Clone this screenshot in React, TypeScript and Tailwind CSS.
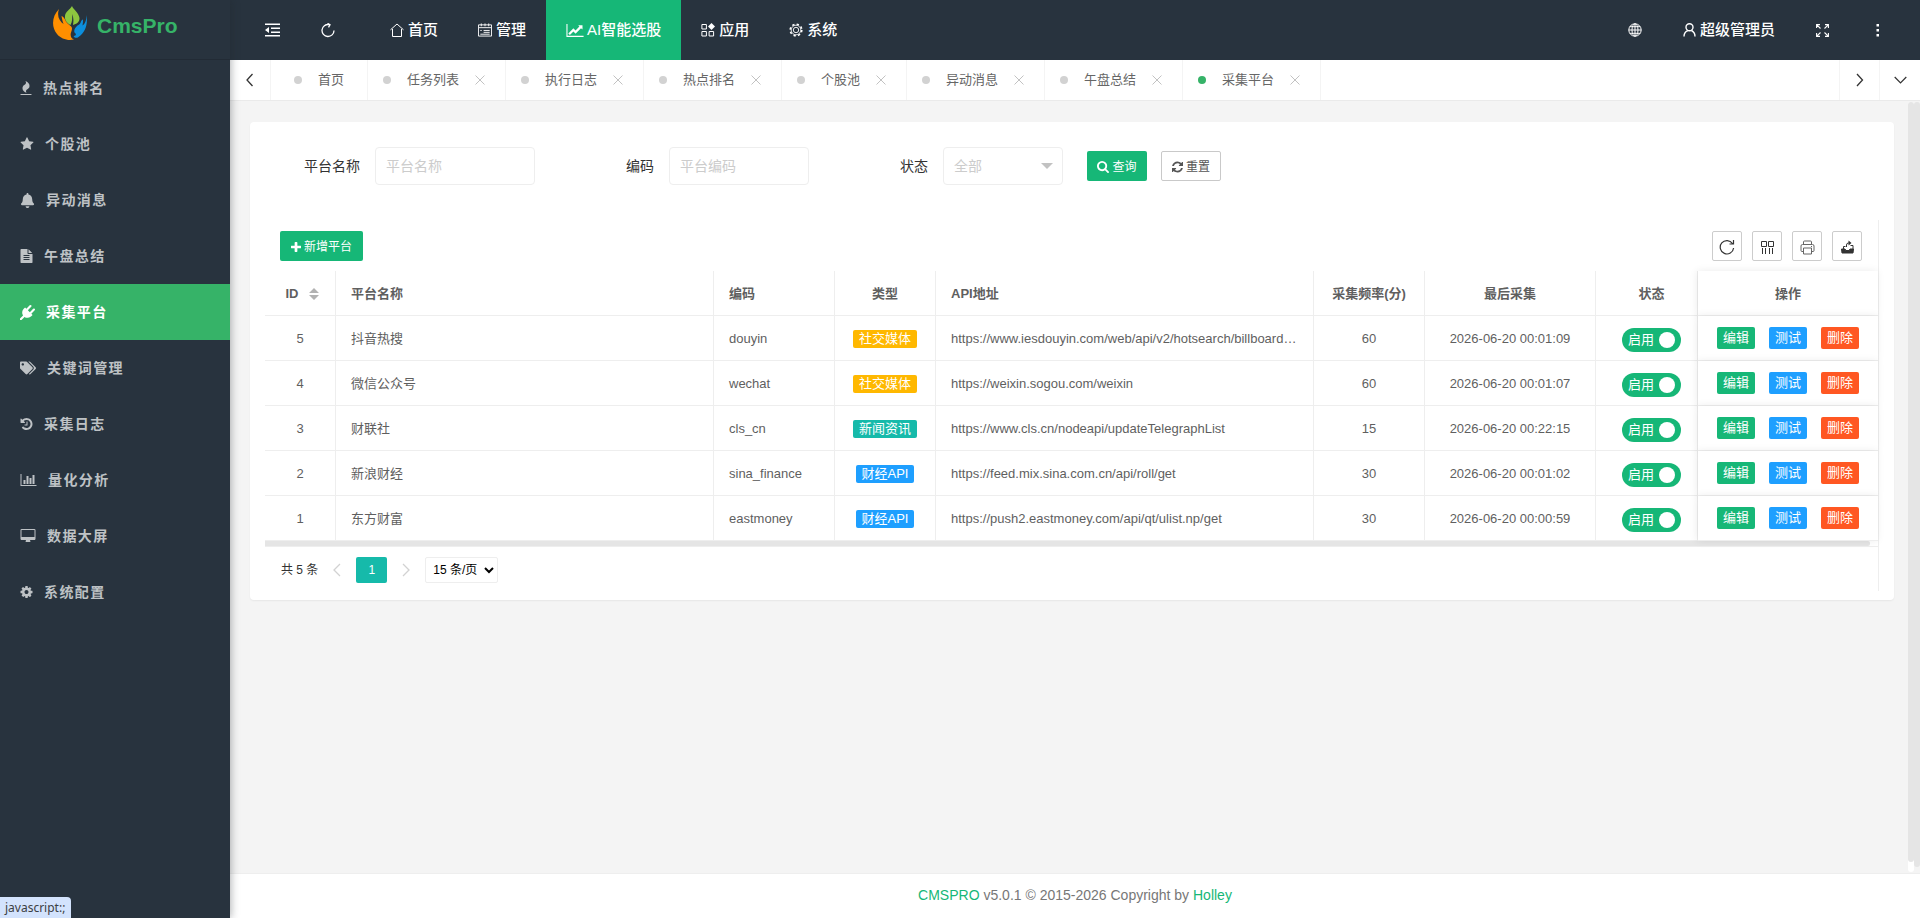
import type { ReactNode } from "react";
import { FaBell, FaTags } from "react-icons/fa";

type Tone = "amber" | "teal" | "blue";

type Platform = {
  id: number;
  name: string;
  code: string;
  type: string;
  tone: Tone;
  url: string;
  minutes: number;
  last: string;
};

const platforms: Platform[] = [
  { id: 5, name: "抖音热搜", code: "douyin", type: "社交媒体", tone: "amber", url: "https://www.iesdouyin.com/web/api/v2/hotsearch/billboard…", minutes: 60, last: "2026-06-20 00:01:09" },
  { id: 4, name: "微信公众号", code: "wechat", type: "社交媒体", tone: "amber", url: "https://weixin.sogou.com/weixin", minutes: 60, last: "2026-06-20 00:01:07" },
  { id: 3, name: "财联社", code: "cls_cn", type: "新闻资讯", tone: "teal", url: "https://www.cls.cn/nodeapi/updateTelegraphList", minutes: 15, last: "2026-06-20 00:22:15" },
  { id: 2, name: "新浪财经", code: "sina_finance", type: "财经API", tone: "blue", url: "https://feed.mix.sina.com.cn/api/roll/get", minutes: 30, last: "2026-06-20 00:01:02" },
  { id: 1, name: "东方财富", code: "eastmoney", type: "财经API", tone: "blue", url: "https://push2.eastmoney.com/api/qt/ulist.np/get", minutes: 30, last: "2026-06-20 00:00:59" },
];

const tones: Record<Tone, string> = {
  amber: "bg-[#ffb800]",
  teal: "bg-[#16baaa]",
  blue: "bg-[#1e9fff]",
};

const menu: { label: string; icon: ReactNode }[] = [
  { label: "热点排名", icon: <IconFire /> },
  { label: "个股池", icon: <IconStar /> },
  { label: "异动消息", icon: <FaBell size={15} /> },
  { label: "午盘总结", icon: <IconFile /> },
  { label: "采集平台", icon: <IconPlug /> },
  { label: "关键词管理", icon: <FaTags size={16} /> },
  { label: "采集日志", icon: <IconHistory /> },
  { label: "量化分析", icon: <IconBars /> },
  { label: "数据大屏", icon: <IconDesktop /> },
  { label: "系统配置", icon: <IconCog /> },
];

const nav: { label: string; icon: ReactNode }[] = [
  { label: "首页", icon: <IconHome /> },
  { label: "管理", icon: <IconCalendar /> },
  { label: "AI智能选股", icon: <IconTrend /> },
  { label: "应用", icon: <IconApps /> },
  { label: "系统", icon: <IconGear /> },
];

const tabs = ["任务列表", "执行日志", "热点排名", "个股池", "异动消息", "午盘总结", "采集平台"];

function App() {
  return (
    <div className="flex min-h-screen bg-[#f4f4f4] font-['Liberation_Sans','Noto_Sans_CJK_SC',sans-serif] text-sm text-[#333]">
      <Sidebar />
      <div className="flex min-w-0 flex-1 flex-col">
        <Header />
        <TabBar />
        <div className="flex flex-1">
          <main className="min-w-0 flex-1 pt-[21px] pr-3.5 pl-5">
            <section className="rounded bg-white pb-[9px] shadow-[0_1px_2px_rgba(0,0,0,0.06)]">
              <SearchForm />
              <div className="mx-[15px] border-r border-[#eee] pb-2">
                <Toolbar />
                <PlatformTable />
                <Pagination />
              </div>
            </section>
          </main>
          {/* scroll tracks of the inner frame and of the page */}
          <div className="mt-px flex w-3 shrink-0">
            <div className="mb-px w-1.5 rounded bg-white pb-2.5">
              <div className="h-full rounded bg-[#e5e5e5]" />
            </div>
            <div className="mb-1.5 w-1.5 rounded bg-[#e5e5e5]" />
          </div>
        </div>
        <footer className="h-[45px] border-t border-[#eee] bg-white text-center leading-[42px] text-[#777]">
          <a href="#" className="text-[#16b777]">CMSPRO</a> v5.0.1 © 2015-2026 Copyright by{" "}
          <a href="#" className="text-[#16b777]">Holley</a>
        </footer>
      </div>
      <div className="fixed bottom-0 left-0 z-20 h-[21px] w-[71px] rounded-tr bg-[#d3e3fd] pl-[5px] font-['Noto_Sans',sans-serif] text-xs leading-[21px] text-[#3c4043]">
        javascript:;
      </div>
    </div>
  );
}

function Sidebar() {
  return (
    <aside className="relative z-10 w-[230px] shrink-0 bg-[#28333e] shadow-[1px_0_8px_rgba(29,35,41,0.35)]">
      <a href="#" className="flex h-[60px] items-start gap-2.5 border-b border-[#222b35] pt-1.5 pl-[53px]">
        <Logo />
        <span className="pt-[5px] text-[21px] leading-[30px] font-bold text-[#36b368]">CmsPro</span>
      </a>
      <nav>
        {menu.map((item) => (
          <a
            key={item.label}
            href="#"
            className={
              item.label === "采集平台"
                ? "flex h-14 items-center gap-[11px] bg-[#36b368] pl-5 font-semibold tracking-widest text-white"
                : "flex h-14 items-center gap-[11px] pl-5 font-semibold tracking-widest text-[#bec2c5] hover:text-white"
            }
          >
            {item.icon}
            {item.label}
          </a>
        ))}
      </nav>
    </aside>
  );
}

function Header() {
  return (
    <header className="flex h-[60px] shrink-0 bg-[#28333e] px-[15px] text-[15px] text-white">
      <button type="button" aria-label="收起菜单" className="flex w-[55px] items-center justify-center">
        <IconFold />
      </button>
      <button type="button" aria-label="刷新" className="flex w-[55px] items-center justify-center">
        <IconReload />
      </button>
      <nav className="ml-[15px] flex font-medium">
        {nav.map((item) => (
          <a
            key={item.label}
            href="#"
            className={
              item.label === "AI智能选股"
                ? "flex items-center gap-[3px] bg-[#16b777] px-5 text-white"
                : "flex items-center gap-1 px-5 hover:bg-white/5"
            }
          >
            {item.icon}
            <span className="pb-px">{item.label}</span>
          </a>
        ))}
      </nav>
      <div className="ml-auto flex">
        <button type="button" aria-label="语言" className="flex w-[55px] items-center justify-center">
          <IconGlobe />
        </button>
        <button type="button" className="flex items-center gap-1 px-5 font-medium">
          <IconUser />
          <span className="pb-px">超级管理员</span>
        </button>
        <button type="button" aria-label="全屏" className="flex w-[55px] items-center justify-center">
          <IconExpand />
        </button>
        <button type="button" aria-label="更多" className="flex w-[55px] items-center justify-center">
          <svg width="4" height="14" viewBox="0 0 4 14" fill="currentColor">
            <path d="M.5 1H3v2.500H.5zM.5 6H3v2.500H.5zM.5 11H3v2.500H.5z" />
          </svg>
        </button>
      </div>
    </header>
  );
}

function TabBar() {
  return (
    <div className="flex h-[41px] shrink-0 border-b border-[#eaeaea] bg-white text-[13px] text-[#666]">
      <button type="button" aria-label="向左" className="flex w-[41px] items-center justify-center border-r border-[#f4f4f4] text-[#333]">
        <Chevron d="M7.500 1 2 7l5.500 6" />
      </button>
      <a href="#" className="flex w-[97px] items-center justify-center gap-4 border-r border-[#f4f4f4]">
        <i className="size-2 rounded-full bg-[#d2d2d2]" />
        首页
      </a>
      {tabs.map((tab) => (
        <div key={tab} className="flex items-center border-r border-[#f4f4f4] pr-5 pl-[15px]">
          <i className={tab === "采集平台" ? "size-2 rounded-full bg-[#36b368]" : "size-2 rounded-full bg-[#d2d2d2]"} />
          <a href="#" className="px-4">{tab}</a>
          <button type="button" aria-label="关闭" className="text-[#c2c2c2]">
            <svg width="10" height="10" viewBox="0 0 10 10" fill="none" stroke="currentColor">
              <path d="m.5.5 9 9m0-9-9 9" />
            </svg>
          </button>
        </div>
      ))}
      <button type="button" aria-label="向右" className="ml-auto flex w-10 items-center justify-center border-l border-[#f4f4f4] text-[#333]">
        <Chevron d="m2 1 5.500 6L2 13" />
      </button>
      <button type="button" aria-label="标签操作" className="flex w-[41px] items-center justify-center border-l border-[#f4f4f4] text-[#333]">
        <svg width="13" height="8" viewBox="0 0 13 8" fill="none" stroke="currentColor" strokeWidth="1.200">
          <path d="m.7 1 5.800 6 5.800-6" />
        </svg>
      </button>
    </div>
  );
}

function SearchForm() {
  return (
    <form className="flex h-[98px] items-start pt-[25px]">
      <label htmlFor="name" className="w-[110px] text-right leading-[38px]">平台名称</label>
      <input id="name" placeholder="平台名称" className="ml-[15px] h-[38px] w-40 rounded border border-[#eee] px-2.5 placeholder:text-[#ccc]" />
      <label htmlFor="code" className="w-[119px] text-right leading-[38px]">编码</label>
      <input id="code" placeholder="平台编码" className="ml-[15px] h-[38px] w-[140px] rounded border border-[#eee] px-2.5 placeholder:text-[#ccc]" />
      <label htmlFor="status" className="w-[119px] text-right leading-[38px]">状态</label>
      <div className="relative ml-[15px]">
        <select id="status" className="h-[38px] w-[120px] appearance-none rounded border border-[#eee] bg-white px-2.5 text-[#ccc]">
          <option>全部</option>
          <option>启用</option>
          <option>停用</option>
        </select>
        <i className="pointer-events-none absolute top-4 right-2.5 border-x-6 border-t-6 border-x-transparent border-t-[#c2c2c2]" />
      </div>
      <div className="ml-6 flex gap-3.5 pt-1 text-xs">
        <button type="submit" className="flex h-[30px] w-[60px] items-center justify-center gap-[3px] rounded-xs bg-[#16b777] pt-0.5 text-white">
          <IconSearch />
          查询
        </button>
        <button type="reset" className="flex h-[30px] w-[60px] items-center justify-center gap-[3px] rounded-xs border border-[#c9c9c9] pt-0.5 text-[#555]">
          <IconRefresh />
          重置
        </button>
      </div>
    </form>
  );
}

function Toolbar() {
  const tool = "flex size-[30px] items-center justify-center rounded-xs border border-[#ccc] pt-0.5 text-[#333]";

  return (
    <div className="flex h-[51px] items-start pt-[11px] pr-4 pl-[15px]">
      <button type="button" className="flex h-[30px] w-[83px] items-center justify-center gap-[3px] rounded-xs bg-[#16b777] pt-0.5 text-xs text-white">
        <IconPlus />
        新增平台
      </button>
      <div className="ml-auto flex gap-2.5">
        <button type="button" aria-label="刷新" className={tool}>
          <svg width="16" height="16" viewBox="0 0 16 16" fill="none" stroke="currentColor" strokeWidth="1.200">
            <path d="M14.600 9A6.700 6.700 0 1 1 13.500 4.500M14.500 1v4h-4" />
          </svg>
        </button>
        <button type="button" aria-label="筛选列" className={tool}>
          <svg width="15" height="15" viewBox="0 0 15 15" fill="none" stroke="currentColor">
            <path d="M1.500 1.500h5v5h-5zM8.500 1.500h5v5h-5zM2.500 8v6M5.500 8v6M9.500 8v6M12.500 8v6" />
          </svg>
        </button>
        <button type="button" aria-label="打印" className={tool}>
          <svg width="15" height="15" viewBox="0 0 15 15" fill="none" stroke="#666">
            <path d="M3.500 4V2q0-1 1-1h6q1 0 1 1v2M3.500 11.500H2q-1 0-1-1V6q0-1.500 1.500-1.500h10Q14 4.500 14 6v4.500q0 1-1 1h-1.500M3.500 8h8v6h-8zM11 6.500h1" />
          </svg>
        </button>
        <button type="button" aria-label="导出" className={tool}>
          <svg width="13" height="14" viewBox="0 0 13 14" fill="none" stroke="currentColor">
            <path d="M.5 9h3.500l1 1.500h3L9 9h3.500l-.5 4H1z" fill="currentColor" />
            <path d="M2.500 9V6.500h2M9.500 5.500h2.500V9M5.500 7V5q0-2 2-2h1" />
            <path d="M7.500.5 10.500 3l-3 2.500z" fill="currentColor" stroke="none" />
          </svg>
        </button>
      </div>
    </div>
  );
}

function PlatformTable() {
  const th = "h-[45px] border-r border-b border-[#eee] px-[15px] pt-0.5 font-bold";
  const td = "h-[45px] truncate border-r border-b border-[#eee] px-[15px] pt-0.5";
  const action = "h-[22px] w-[38px] rounded-xs text-white";

  return (
    <div className="border-b border-[#eee]">
      <table className="w-full table-fixed border-separate border-spacing-0 text-[13px] text-[#5f5f5f]">
        <colgroup>
          <col className="w-[71px]" />
          <col />
          <col className="w-[121px]" />
          <col className="w-[101px]" />
          <col />
          <col className="w-[111px]" />
          <col className="w-[171px]" />
          <col className="w-[102px]" />
          <col className="w-[180px]" />
        </colgroup>
        <thead>
          <tr>
            <th className="h-[45px] border-r border-b border-[#eee] pt-0.5 pl-1 font-bold">
              <div className="flex items-center justify-center gap-2.5">
                ID
                <svg width="10" height="12" viewBox="0 0 10 12" fill="#b2b2b2">
                  <path d="m5 0 5 5H0zM5 12 0 7h10z" />
                </svg>
              </div>
            </th>
            <th className={`${th} text-left`}>平台名称</th>
            <th className={`${th} text-left`}>编码</th>
            <th className={th}>类型</th>
            <th className={`${th} text-left`}>API地址</th>
            <th className={`${th} whitespace-nowrap`}>采集频率(分)</th>
            <th className={th}>最后采集</th>
            <th className="h-[45px] border-r border-b border-[#eee] pt-0.5 pl-2.5 font-bold">状态</th>
            <th className="relative h-[45px] border-b border-[#eee] bg-white pt-0.5 font-bold shadow-[-1px_0_8px_rgba(0,0,0,0.08)]">操作</th>
          </tr>
        </thead>
        <tbody>
          {platforms.map((p) => (
            <tr key={p.id}>
              <td className={`${td} text-center`}>{p.id}</td>
              <td className={td}>{p.name}</td>
              <td className={td}>{p.code}</td>
              <td className="h-[45px] border-r border-b border-[#eee] pt-0.5 text-center">
                <span className={`inline-block h-[18px] rounded-xs px-1.5 leading-[17px] text-white ${tones[p.tone]}`}>{p.type}</span>
              </td>
              <td className={td}>{p.url}</td>
              <td className={`${td} text-center`}>{p.minutes}</td>
              <td className={`${td} text-center`}>{p.last}</td>
              <td className="h-[45px] border-r border-b border-[#eee] pt-1 pl-2.5">
                <label className="mx-auto flex h-6 w-[59px] items-center justify-between rounded-full bg-[#16b777] px-1.5 text-white">
                  <input type="checkbox" defaultChecked className="sr-only" />
                  启用
                  <i className="size-4 rounded-full bg-white" />
                </label>
              </td>
              <td className="relative h-[45px] border-b border-[#eee] bg-white shadow-[-1px_0_8px_rgba(0,0,0,0.08)]">
                <div className="flex justify-center gap-3.5">
                  <button type="button" className={`${action} bg-[#16b777]`}>编辑</button>
                  <button type="button" className={`${action} bg-[#1e9fff]`}>测试</button>
                  <button type="button" className={`${action} bg-[#ff5722]`}>删除</button>
                </div>
              </td>
            </tr>
          ))}
        </tbody>
      </table>
      <div className="h-[5px] pr-2">
        <div className="h-full rounded-r-xs bg-[#e5e5e5]" />
      </div>
    </div>
  );
}

function Pagination() {
  return (
    <div className="flex items-center pt-2.5 pl-4 text-xs">
      <span>共 5 条</span>
      <button type="button" aria-label="上一页" className="flex h-[26px] w-[38px] items-center justify-center text-[#d2d2d2]">
        <Chevron d="M8 1 2 7l6 6" />
      </button>
      <button type="button" className="h-[26px] w-[31px] rounded-xs bg-[#16baaa] text-white">1</button>
      <button type="button" aria-label="下一页" className="flex h-[26px] w-[38px] items-center justify-center text-[#d2d2d2]">
        <Chevron d="m2 1 6 6-6 6" />
      </button>
      <select aria-label="每页条数" className="h-[26px] w-[73px] rounded-xs border border-[#eee] bg-white pl-[3px] text-black">
        <option>15 条/页</option>
        <option>30 条/页</option>
        <option>50 条/页</option>
      </select>
    </div>
  );
}

function Chevron({ d }: { d: string }) {
  return (
    <svg width="10" height="14" viewBox="0 0 10 14" fill="none" stroke="currentColor" strokeWidth="1.300">
      <path d={d} />
    </svg>
  );
}

function Logo() {
  return (
    <svg width="34" height="34" viewBox="0 0 34 34">
      <path fill="#8dc63f" d="M19 0c1 3 7 7 7.500 12 .2 4-3 6-6.500 7 .5-3 1-7-1-11 .5 4 .3 8-1.500 11-4-2-6-5-5.500-9C12.500 5 17 4 19 0z" />
      <path fill="#ff8f00" d="M6 3C-1 10-2 21 4 28c4 5 11 7 17 5.500-3-1-4-4-3-7 1-3 2-5-1-7-2-1.500-4-3-5-6-1-2-2-3-3.500-3.500.5 3 1 5 2 8-4-3-7-8-4.500-15z" />
      <path fill="#0c8fdd" d="M33.500 9c1.500 9-1 17-8 22-2 1.500-4 1-5-1 3 0 3-2 1-3.500-1-3 1-5 3-7 2-1 3-2 3.500-4 .5-1 1-2 2-2 0 2 0 4-.5 6 3-2 4-6 4-10.500z" />
    </svg>
  );
}

function IconFire() {
  return (
    <svg width="12" height="14" viewBox="128 0 1536 1792" fill="currentColor">
      <path d="M1600 1696v64q0 13-9.500 22.500t-22.500 9.500h-1344q-13 0-22.500-9.500t-9.500-22.500v-64q0-13 9.500-22.500t22.500-9.500h1344q13 0 22.500 9.500t9.500 22.500zm-256-1056q0 78-24.500 144t-64 112.500-87.500 88-96 77.500-87.500 72-64 81.500-24.500 96.500q0 96 67 224l-4-1 1 1q-90-41-160-83t-138.500-100-113.500-122.500-72.500-150.500-27.500-184q0-78 24.500-144t64-112.500 87.500-88 96-77.500 87.500-72 64-81.500 24.500-96.500q0-94-66-224l3 1-1-1q90 41 160 83t138.500 100 113.500 122.500 72.500 150.500 27.500 184z" />
    </svg>
  );
}

function IconStar() {
  return (
    <svg width="14" height="14" viewBox="64 0 1664 1792" fill="currentColor">
      <path d="M1728 647q0 22-26 48l-363 354 86 500q1 7 1 20 0 21-10.500 35.500t-30.500 14.500q-19 0-40-12l-449-236-449 236q-22 12-40 12-21 0-31.500-14.500t-10.500-35.500q0-6 2-20l86-500-364-354q-25-27-25-48 0-37 56-46l502-73 225-455q19-41 49-41t49 41l225 455 502 73q56 9 56 46z" />
    </svg>
  );
}

function IconFile() {
  return (
    <svg width="13" height="14" viewBox="128 0 1536 1792" fill="currentColor">
      <path d="M1596 476q14 14 28 36h-472v-472q22 14 36 28zm-476 164h544v1056q0 40-28 68t-68 28h-1344q-40 0-68-28t-28-68v-1600q0-40 28-68t68-28h800v544q0 40 28 68t68 28zm160 736v-64q0-14-9-23t-23-9h-704q-14 0-23 9t-9 23v64q0 14 9 23t23 9h704q14 0 23-9t9-23zm0-256v-64q0-14-9-23t-23-9h-704q-14 0-23 9t-9 23v64q0 14 9 23t23 9h704q14 0 23-9t9-23zm0-256v-64q0-14-9-23t-23-9h-704q-14 0-23 9t-9 23v64q0 14 9 23t23 9h704q14 0 23-9t9-23z" />
    </svg>
  );
}

function IconPlug() {
  return (
    <svg width="15" height="15" viewBox="0 0 1792 1792" fill="currentColor">
      <path d="M1755 453q37 38 37 90.500t-37 90.500l-401 400 150 150-160 160q-163 163-389.500 186.500t-411.500-100.500l-362 362h-181v-181l362-362q-124-185-100.500-411.500t186.500-389.500l160-160 150 150 400-401q38-37 91-37t90 37 37 90.500-37 90.500l-400 401 234 234 401-400q38-37 91-37t90 37z" />
    </svg>
  );
}

function IconHistory() {
  return (
    <svg width="13" height="14" viewBox="128 0 1536 1792" fill="currentColor">
      <path d="M1664 896q0 156-61 298t-164 245-245 164-298 61q-172 0-327-72.500t-264-204.500q-7-10-6.500-22.500t8.500-20.500l137-138q10-9 25-9 16 2 23 12 73 95 179 147t225 52q104 0 198.500-40.500t163.500-109.500 109.500-163.500 40.500-198.500-40.500-198.500-109.500-163.500-163.500-109.500-198.500-40.500q-98 0-188 35.500t-160 101.500l137 138q31 30 14 69-17 40-59 40h-448q-26 0-45-19t-19-45v-448q0-42 40-59 39-17 69 14l130 129q107-101 244.500-156.500t284.500-55.500q156 0 298 61t245 164 164 245 61 298zm-640-288v448q0 14-9 23t-23 9h-320q-14 0-23-9t-9-23v-64q0-14 9-23t23-9h224v-352q0-14 9-23t23-9h64q14 0 23 9t9 23z" />
    </svg>
  );
}

function IconBars() {
  return (
    <svg width="17" height="14" viewBox="0 0 2048 1792" fill="currentColor">
      <path d="M640 896v512h-256v-512h256zm384-512v1024h-256v-1024h256zm1024 1152v128h-2048v-1536h128v1408h1920zm-640-896v768h-256v-768h256zm384-384v1152h-256v-1152h256z" />
    </svg>
  );
}

function IconDesktop() {
  return (
    <svg width="16" height="14" viewBox="0 0 1920 1792" fill="currentColor">
      <path d="M1792 992v-832q0-13-9.500-22.500t-22.500-9.500h-1600q-13 0-22.500 9.500t-9.500 22.500v832q0 13 9.500 22.500t22.500 9.500h1600q13 0 22.500-9.500t9.500-22.500zm128-832v1088q0 66-47 113t-113 47h-544q0 37 16 77.500t32 71 16 43.500q0 26-19 45t-45 19h-512q-26 0-45-19t-19-45q0-14 16-44t32-70 16-78h-544q-66 0-113-47t-47-113v-1088q0-66 47-113t113-47h1600q66 0 113 47t47 113z" />
    </svg>
  );
}

function IconCog() {
  return (
    <svg width="13" height="14" viewBox="128 0 1536 1792" fill="currentColor">
      <path d="M1152 896q0-106-75-181t-181-75-181 75-75 181 75 181 181 75 181-75 75-181zm512-109v222q0 12-8 23t-20 13l-185 28q-19 54-39 91 35 50 107 138 10 12 10 25t-9 23q-27 37-99 108t-94 71q-12 0-26-9l-138-108q-44 23-91 38-16 136-29 186-7 28-36 28h-222q-14 0-24.500-8.500t-11.500-21.500l-28-184q-49-16-90-37l-141 107q-10 9-25 9-14 0-25-11-126-114-165-168-7-10-7-23 0-12 8-23 15-21 51-66.500t54-70.500q-27-50-41-99l-183-27q-13-2-21-12.500t-8-23.500v-222q0-12 8-23t19-13l186-28q14-46 39-92-40-57-107-138-10-12-10-24 0-10 9-23 26-36 98.500-107.500t94.500-71.500q13 0 26 10l138 107q44-23 91-38 16-136 29-186 7-28 36-28h222q14 0 24.500 8.500t11.500 21.500l28 184q49 16 90 37l142-107q9-9 24-9 13 0 25 10 129 119 165 170 7 8 7 22 0 12-8 23-15 21-51 66.500t-54 70.500q26 50 41 98l183 28q13 2 21 12.500t8 23.500z" />
    </svg>
  );
}

function IconSearch() {
  return (
    <svg width="12" height="12" viewBox="64 128 1664 1664" fill="currentColor">
      <path d="M1216 832q0-185-131.500-316.500t-316.500-131.500-316.500 131.500-131.500 316.500 131.500 316.500 316.500 131.500 316.500-131.500 131.500-316.500zm512 832q0 52-38 90t-90 38q-54 0-90-38l-343-342q-179 124-399 124-143 0-273.500-55.500t-225-150-150-225-55.500-273.500 55.500-273.500 150-225 225-150 273.500-55.500 273.500 55.500 225 150 150 225 55.500 273.500q0 220-124 399l343 343q37 37 37 90z" />
    </svg>
  );
}

function IconRefresh() {
  return (
    <svg width="11" height="12" viewBox="128 64 1536 1664" fill="currentColor">
      <path d="M1639 1056q0 5-1 7-64 268-268 434.500t-478 166.500q-146 0-282.500-55t-243.500-157l-129 129q-19 19-45 19t-45-19-19-45v-448q0-26 19-45t45-19h448q26 0 45 19t19 45-19 45l-137 137q71 66 161 102t187 36q134 0 250-65t186-179q11-17 53-117 8-23 30-23h192q13 0 22.500 9.500t9.500 22.500zm25-800v448q0 26-19 45t-45 19h-448q-26 0-45-19t-19-45 19-45l138-138q-148-137-349-137-134 0-250 65t-186 179q-11 17-53 117-8 23-30 23h-199q-13 0-22.500-9.500t-9.500-22.500v-7q65-268 270-434.500t480-166.500q146 0 284 55.500t245 156.500l130-129q19-19 45-19t45 19 19 45z" />
    </svg>
  );
}

function IconPlus() {
  return (
    <svg width="10" height="10" viewBox="192 128 1408 1408" fill="currentColor">
      <path d="M1600 736v192q0 40-28 68t-68 28h-416v416q0 40-28 68t-68 28h-192q-40 0-68-28t-28-68v-416h-416q-40 0-68-28t-28-68v-192q0-40 28-68t68-28h416v-416q0-40 28-68t68-28h192q40 0 68 28t28 68v416h416q40 0 68 28t28 68z" />
    </svg>
  );
}

function IconTrend() {
  return (
    <svg width="18" height="15" viewBox="0 0 2048 1792" fill="currentColor">
      <path d="M2048 1536v128h-2048v-1536h128v1408h1920zm-128-1248v435q0 21-19.500 29.500t-35.500-7.500l-121-121-633 633q-10 10-23 10t-23-10l-233-233-416 416-192-192 585-585q10-10 23-10t23 10l233 233 464-464-121-121q-16-16-7.500-35.500t29.500-19.500h435q14 0 23 9t9 23z" />
    </svg>
  );
}

function IconFold() {
  return (
    <svg width="15" height="14" viewBox="0 0 15 14" fill="currentColor">
      <path d="M0 .5h15V2H0zM6 4.500h9V6H6zM6 8.500h9V10H6zM0 12h15v1.500H0zM4 4v6L0 7z" />
    </svg>
  );
}

function IconReload() {
  return (
    <svg width="14" height="15" viewBox="0 0 14 15" fill="none" stroke="currentColor" strokeWidth="1.300">
      <path d="M13 7.500a6 6 0 1 1-5-5.900M6.500.3 9 1.800 7.500 4.300" />
    </svg>
  );
}

function IconHome() {
  return (
    <svg width="14" height="14" viewBox="0 0 14 14" fill="none" stroke="currentColor">
      <path d="M.5 6.800 7 1l6.500 5.800M2.500 6v7.500h9V6" />
    </svg>
  );
}

function IconCalendar() {
  return (
    <svg width="14" height="14" viewBox="0 0 15 14" fill="none" stroke="currentColor">
      <path d="M.5 1.500h14v12H.5zM1 4.500h13M3.500 0v3M7.500 0v3M11.500 0v3M6 7.500h6.500M6 9.500h6.500M2.500 7.500H4M2.500 11.500h10" />
    </svg>
  );
}

function IconApps() {
  return (
    <svg width="14" height="14" viewBox="0 0 14 14" fill="none" stroke="currentColor">
      <path d="M.9 1.500h4.500v4.500H.9zM.9 8.500h4.500V13H.9zM8.100 8.500h4.500V13H8.100z" />
      <path d="m10.500 0 3.500 3.500L10.500 7 7 3.500z" fill="currentColor" stroke="none" />
    </svg>
  );
}

function IconGear() {
  return (
    <svg width="14" height="14" viewBox="0 0 14 14" fill="none" stroke="currentColor">
      <circle cx="7" cy="7" r="5.800" strokeWidth="1.600" strokeDasharray="2.300 2.250" />
      <circle cx="7" cy="7" r="4.800" strokeWidth=".8" />
      <circle cx="7" cy="7" r="2.700" strokeWidth=".9" />
    </svg>
  );
}

function IconGlobe() {
  return (
    <svg width="14" height="14" viewBox="0 0 14 14" fill="none" stroke="currentColor">
      <circle cx="7" cy="7" r="6.200" />
      <ellipse cx="7" cy="7" rx="3" ry="6.200" />
      <path d="M7 .8v12.400M.8 7h12.400M1.800 3.700h10.400M1.800 10.300h10.400" />
    </svg>
  );
}

function IconUser() {
  return (
    <svg width="13" height="14" viewBox="0 0 13 14" fill="none" stroke="currentColor" strokeWidth="1.400">
      <circle cx="6.500" cy="4.300" r="3.500" />
      <path d="M1 13.500C1 10.500 2.500 8.500 4.800 7.600M12 13.500c0-3-1.500-5-3.500-6" />
    </svg>
  );
}

function IconExpand() {
  return (
    <svg width="13" height="13" viewBox="0 0 13 13" fill="none" stroke="currentColor" strokeWidth="1.100">
      <path d="M.6 4V.6H4M.8.8l3.700 3.700M9 .6h3.400V4M12.200.8 8.500 4.500M.6 9v3.400H4M.8 12.200l3.700-3.700M9 12.400h3.400V9M12.200 12.200 8.500 8.500" />
    </svg>
  );
}

export default App;
